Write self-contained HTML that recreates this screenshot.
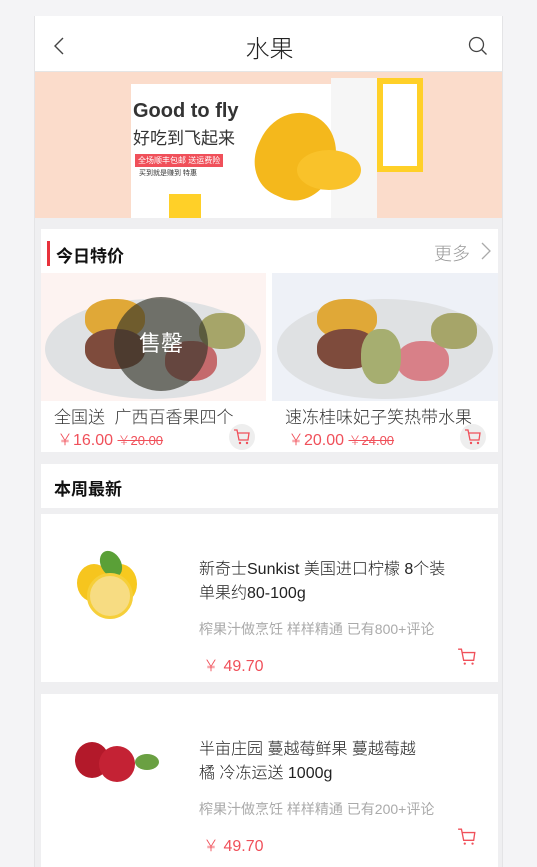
<!DOCTYPE html>
<html><head><meta charset="utf-8"><style>
*{margin:0;padding:0;box-sizing:border-box}
body{width:537px;height:867px;background:#f4f4f6;font-family:"Liberation Sans","Noto Sans CJK SC",sans-serif;overflow:hidden;position:relative}
.page{position:absolute;left:34px;top:16px;width:469px;height:851px;background:#efeff1;border-left:1px solid #e4e4e6;border-right:1px solid #e4e4e6;overflow:hidden}
.hdr{position:absolute;left:0;top:0;width:469px;height:56px;background:#fff;border-bottom:1px solid #e5e5e5}
.hdr .t{position:absolute;left:0;width:100%;text-align:center;top:13px;font-size:24px;color:#222;font-weight:300}
.banner{position:absolute;left:0;top:56px;width:469px;height:146px;background:#fbdccb;overflow:hidden}
.card{position:absolute;left:6px;width:457px;background:#fff}
.abs{position:absolute}
.red{color:#f0505a}
</style></head><body>
<div class="page">
<div class="hdr">
<svg class="abs" style="left:18px;top:21px" width="12" height="18" viewBox="0 0 12 18"><path d="M10 1L2 9l8 8" fill="none" stroke="#444" stroke-width="1.4"/></svg>
<div class="t">水果</div>
<svg class="abs" style="left:433px;top:20px" width="20" height="20" viewBox="0 0 20 20"><circle cx="8.5" cy="8.5" r="7" fill="none" stroke="#444" stroke-width="1.3"/><path d="M13.5 13.5l5 5" stroke="#444" stroke-width="1.3"/></svg>
</div>
<div class="banner">
<div class="abs" style="left:96px;top:12px;width:200px;height:134px;background:#fff"></div>
<div class="abs" style="left:296px;top:6px;width:46px;height:140px;background:#f6f6f6"></div>
<div class="abs" style="left:342px;top:6px;width:46px;height:94px;background:#fff;border:6px solid #ffd028"></div>
<div class="abs" style="left:134px;top:122px;width:32px;height:24px;background:#ffd028"></div>
<div class="abs" style="left:98px;top:28px;font-size:20px;font-weight:bold;color:#333">Good to fly</div>
<div class="abs" style="left:98px;top:52px;font-size:17px;color:#333">好吃到飞起来</div>
<div class="abs" style="left:100px;top:82px;font-size:8px;background:#f0505a;color:#fff;padding:1px 3px">全场顺丰包邮 送运费险</div>
<div class="abs" style="left:104px;top:96px;font-size:7px;color:#333">买到就是赚到 特惠</div>
<div class="abs" style="left:222px;top:40px;width:78px;height:88px;border-radius:50% 50% 45% 45%;background:#f4b81c;transform:rotate(25deg)"></div>
<div class="abs" style="left:262px;top:78px;width:64px;height:40px;border-radius:50%;background:#f9c22a"></div>
</div>
<div class="card" style="top:213px;height:223px">
<div class="abs" style="left:6px;top:12px;width:3px;height:25px;background:#e8323c"></div>
<div class="abs" style="left:15px;top:13px;font-size:17px;font-weight:bold;color:#111">今日特价</div>
<div class="abs" style="left:393px;top:11px;font-size:18px;color:#999;font-weight:300">更多</div>
<svg class="abs" style="left:440px;top:13px" width="10" height="18" viewBox="0 0 10 18"><path d="M1 1l8 8-8 8" fill="none" stroke="#aaa" stroke-width="1.3"/></svg>
<div class="abs" style="left:0;top:44px;width:225px;height:128px;background:#fdf3f1"></div>
<div class="abs" style="left:231px;top:44px;width:226px;height:128px;background:#eef1f7"></div>
<div class="abs" style="left:4px;top:70px;width:216px;height:100px;border-radius:50%;background:#dfe1e3"></div>
<div class="abs" style="left:236px;top:70px;width:216px;height:100px;border-radius:50%;background:#dfe1e3"></div>
<div class="abs" style="left:44px;top:70px;width:60px;height:40px;border-radius:45%;background:#e0a837"></div>
<div class="abs" style="left:44px;top:100px;width:60px;height:40px;border-radius:45%;background:#7e4b3c"></div>
<div class="abs" style="left:124px;top:112px;width:52px;height:40px;border-radius:45%;background:#c46a6c"></div>
<div class="abs" style="left:158px;top:84px;width:46px;height:36px;border-radius:45%;background:#a6a569"></div>
<div class="abs" style="left:276px;top:70px;width:60px;height:40px;border-radius:45%;background:#e0a837"></div>
<div class="abs" style="left:276px;top:100px;width:60px;height:40px;border-radius:45%;background:#7e4b3c"></div>
<div class="abs" style="left:356px;top:112px;width:52px;height:40px;border-radius:45%;background:#d88088"></div>
<div class="abs" style="left:390px;top:84px;width:46px;height:36px;border-radius:45%;background:#a6a569"></div>
<div class="abs" style="left:320px;top:100px;width:40px;height:55px;border-radius:45%;background:#a6ae70"></div>
<div class="abs" style="left:73px;top:68px;width:94px;height:94px;border-radius:50%;background:rgba(50,50,40,.65);color:#fff;font-size:22px;text-align:center;line-height:94px">售罄</div>
<div class="abs" style="left:13px;top:174px;font-size:17px;color:#333;font-weight:300">全国送&nbsp; 广西百香果四个</div>
<div class="abs" style="left:244px;top:174px;font-size:17px;color:#333;font-weight:300">速冻桂味妃子笑热带水果</div>
<div class="abs red" style="left:16px;top:197px;font-size:16px;font-weight:300">￥16.00 <span style="font-size:13px;text-decoration:line-through">￥20.00</span></div>
<div class="abs red" style="left:247px;top:197px;font-size:16px;font-weight:300">￥20.00 <span style="font-size:13px;text-decoration:line-through">￥24.00</span></div>
<div class="abs" style="left:188px;top:195px;width:26px;height:26px;border-radius:50%;background:#eee"></div>
<div class="abs" style="left:419px;top:195px;width:26px;height:26px;border-radius:50%;background:#eee"></div>
<svg class="abs" style="left:192px;top:199px" width="18" height="18" viewBox="0 0 18 18"><path d="M1 2h3l2 10h9l1-7H5" fill="none" stroke="#f0505a" stroke-width="1.3"/><circle cx="7" cy="15" r="1.2" fill="#f0505a"/><circle cx="14" cy="15" r="1.2" fill="#f0505a"/></svg>
<svg class="abs" style="left:423px;top:199px" width="18" height="18" viewBox="0 0 18 18"><path d="M1 2h3l2 10h9l1-7H5" fill="none" stroke="#f0505a" stroke-width="1.3"/><circle cx="7" cy="15" r="1.2" fill="#f0505a"/><circle cx="14" cy="15" r="1.2" fill="#f0505a"/></svg>
</div>
<div class="card" style="top:448px;height:44px">
<div class="abs" style="left:13px;top:11px;font-size:17px;font-weight:bold;color:#111">本周最新</div>
</div>
<div class="card" style="top:498px;height:168px">
<div class="abs" style="left:36px;top:50px;width:34px;height:38px;border-radius:50%;background:#f6c51e"></div>
<div class="abs" style="left:62px;top:50px;width:34px;height:40px;border-radius:50%;background:#f7c91f"></div>
<div class="abs" style="left:60px;top:36px;width:20px;height:28px;border-radius:50%;background:#5aa037;transform:rotate(-30deg)"></div>
<div class="abs" style="left:46px;top:59px;width:46px;height:46px;border-radius:50%;background:#f7dc82;border:3px solid #f6cf3a"></div>
<div class="abs" style="left:158px;top:44px;font-size:16px;line-height:24px;color:#222;white-space:nowrap;font-weight:300">新奇士Sunkist 美国进口柠檬 8个装<br>单果约80-100g</div>
<div class="abs" style="left:158px;top:105px;font-size:14px;color:#aaa">榨果汁做烹饪 样样精通 已有800+评论</div>
<div class="abs red" style="left:162px;top:138px;font-size:16px;font-weight:300">￥ 49.70</div>
<svg class="abs" style="left:416px;top:133px" width="20" height="20" viewBox="0 0 18 18"><path d="M1 2h3l2 10h9l1-7H5" fill="none" stroke="#f0505a" stroke-width="1.2"/><circle cx="7" cy="15" r="1" fill="#f0505a"/><circle cx="14" cy="15" r="1" fill="#f0505a"/></svg>
</div>
<div class="card" style="top:678px;height:180px">
<div class="abs" style="left:34px;top:48px;width:34px;height:36px;border-radius:50%;background:#b3192a"></div>
<div class="abs" style="left:58px;top:52px;width:36px;height:36px;border-radius:50%;background:#c42234"></div>
<div class="abs" style="left:94px;top:60px;width:24px;height:16px;border-radius:50%;background:#6aa042"></div>
<div class="abs" style="left:158px;top:44px;font-size:16px;line-height:24px;color:#222;white-space:nowrap;font-weight:300">半亩庄园 蔓越莓鲜果 蔓越莓越<br>橘 冷冻运送 1000g</div>
<div class="abs" style="left:158px;top:105px;font-size:14px;color:#aaa">榨果汁做烹饪 样样精通 已有200+评论</div>
<div class="abs red" style="left:162px;top:138px;font-size:16px;font-weight:300">￥ 49.70</div>
<svg class="abs" style="left:416px;top:133px" width="20" height="20" viewBox="0 0 18 18"><path d="M1 2h3l2 10h9l1-7H5" fill="none" stroke="#f0505a" stroke-width="1.2"/><circle cx="7" cy="15" r="1" fill="#f0505a"/><circle cx="14" cy="15" r="1" fill="#f0505a"/></svg>
</div>
</div>
</body></html>
